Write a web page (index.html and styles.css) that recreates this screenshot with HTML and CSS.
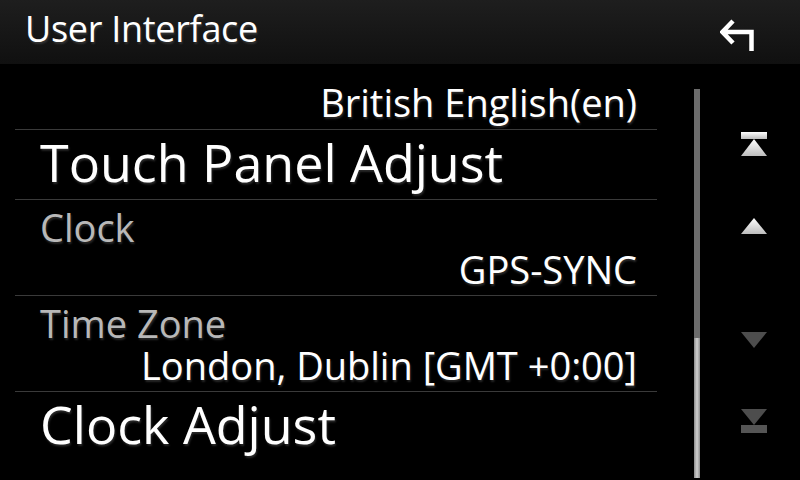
FILE: index.html
```html
<!DOCTYPE html>
<html lang="en">
<head>
    <meta charset="UTF-8">
    <meta name="viewport" content="width=device-width, initial-scale=1.0">
    <title>User Interface</title>
    <link rel="stylesheet" href="styles.css">
</head>
<body>
<div class="header">
    <div class="title">User Interface</div>
    <div class="back">
        <svg width="34" height="36" viewBox="0 0 34 36">
            <path d="M13 5 L2.5 16 L13 27 M3 16 H31.5 V35" fill="none" stroke="#fff" stroke-width="4.5" stroke-linejoin="miter"/>
        </svg>
    </div>
</div>
<div class="main">
    <div class="list">
        <div class="row row-top">
            <div class="value">British English(en)</div>
        </div>
        <div class="row row-big">
            <div class="big">Touch Panel Adjust</div>
        </div>
        <div class="row row-pair">
            <div class="label">Clock</div>
            <div class="value">GPS-SYNC</div>
        </div>
        <div class="row row-pair">
            <div class="label">Time Zone</div>
            <div class="value">London, Dublin [GMT +0:00]</div>
        </div>
        <div class="row row-big">
            <div class="big">Clock Adjust</div>
        </div>
    </div>
    <div class="scrollbar">
        <div class="track"></div>
        <div class="thumb"></div>
    </div>
    <div class="nav">
        <svg class="btn btn-first" width="26" height="24" viewBox="0 0 26 24">
            <defs>
                <linearGradient id="lit" x1="0" y1="0" x2="0" y2="1">
                    <stop offset="0" stop-color="#ffffff"/>
                    <stop offset="1" stop-color="#bdbdbd"/>
                </linearGradient>
            </defs>
            <rect x="0" y="0" width="26" height="7" fill="url(#lit)"/>
            <polygon points="13,7 26,24 0,24" fill="url(#lit)"/>
        </svg>
        <svg class="btn btn-up" width="26" height="16" viewBox="0 0 26 16">
            <polygon points="13,0 26,16 0,16" fill="url(#lit)"/>
        </svg>
        <svg class="btn btn-down" width="26" height="16" viewBox="0 0 26 16">
            <polygon points="0,0 26,0 13,16" fill="#4d4d4d"/>
        </svg>
        <svg class="btn btn-last" width="26" height="24" viewBox="0 0 26 24">
            <polygon points="0,0 26,0 13,16" fill="#4d4d4d"/>
            <rect x="0" y="16" width="26" height="8" fill="#555"/>
        </svg>
    </div>
</div>
</body>
</html>
```

FILE: styles.css
```css
body {
    margin: 0;
    background-color: black;
    color: white;
    font-family: "Open Sans", "Noto Sans", sans-serif;
    width: 800px;
    height: 480px;
    overflow: hidden;
    text-shadow: 1px 2px 2px rgba(90, 90, 90, 0.45);
}

/* Header bar */
.header {
    height: 64px;
    display: flex;
    align-items: center;
    justify-content: space-between;
    background: linear-gradient(#1e1e1e, #101010);
}

.title {
    padding-left: 25px;
    font-size: 36px;
    line-height: 1;
    padding-bottom: 6px;
    letter-spacing: -0.3px;
}

.back {
    display: flex;
    width: 34px;
    margin-right: 46px;
    padding-top: 4px;
}

/* List */
.main {
    display: flex;
}

.list {
    width: 642px;
    margin-left: 15px;
}

.row {
    border-top: 1px solid #3a3a3a;
    box-sizing: border-box;
}

.row-top {
    border-top: none;
    height: 65px;
    padding-top: 19px;
}

.row-big {
    height: 70px;
    padding-top: 6px;
}

.row-pair {
    height: 96px;
    padding-top: 6px;
}

.big {
    font-size: 52px;
    line-height: 52px;
    padding-left: 25px;
}

.label {
    font-size: 38px;
    line-height: 42px;
    color: #b8b8b8;
    padding-left: 25px;
}

.value {
    font-size: 38px;
    line-height: 42px;
    text-align: right;
    padding-right: 20px;
}

.row-top .value {
    line-height: 38px;
}

/* Scrollbar */
.scrollbar {
    width: 6px;
    margin-left: 37px;
    margin-top: 25px;
    height: 389px;
    display: flex;
    flex-direction: column;
}

.track {
    height: 249px;
    background-color: #6c6c6c;
}

.thumb {
    flex: 1;
    background: linear-gradient(to right, #8a8a8a, #d0d0d0, #8a8a8a);
}

/* Page buttons */
.nav {
    display: flex;
    flex-direction: column;
    margin-left: 41px;
}

.btn-first {
    margin-top: 68px;
}

.btn-up {
    margin-top: 62px;
}

.btn-down {
    margin-top: 98px;
}

.btn-last {
    margin-top: 61px;
}
```
